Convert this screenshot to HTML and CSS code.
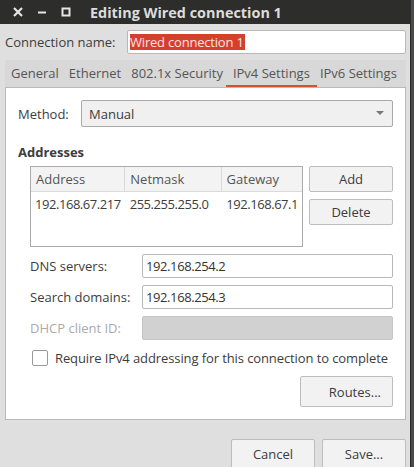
FILE: index.html
```html
<!DOCTYPE html>
<html lang="en">
<head>
    <meta charset="UTF-8">
    <title>Editing Wired connection 1</title>
    <link rel="stylesheet" href="styles.css">
</head>
<body>
    <div class="window">
        <div class="titlebar">
            <span class="wm-btn">
                <svg width="10" height="10" viewBox="0 0 10 10"><path d="M1 1 L9 9 M9 1 L1 9" stroke="#e6e6e6" stroke-width="2.2"/></svg>
            </span>
            <span class="wm-btn">
                <svg width="10" height="10" viewBox="0 0 10 10"><path d="M1 5.5 H9" stroke="#e6e6e6" stroke-width="2"/></svg>
            </span>
            <span class="wm-btn">
                <svg width="10" height="10" viewBox="0 0 10 10"><rect x="1.5" y="1.5" width="7" height="7" fill="none" stroke="#e6e6e6" stroke-width="2"/></svg>
            </span>
            <span class="title">Editing Wired connection 1</span>
        </div>

        <div class="name-row">
            <label class="name-label">Connection name:</label>
            <div class="entry name-entry"><span class="selected">Wired connection 1</span></div>
        </div>

        <div class="notebook">
            <div class="tabs">
                <span class="tab">General</span>
                <span class="tab">Ethernet</span>
                <span class="tab">802.1x Security</span>
                <span class="tab active">IPv4 Settings</span>
                <span class="tab">IPv6 Settings</span>
            </div>
            <div class="panel">
                <div class="method-row">
                    <span class="label">Method:</span>
                    <div class="combo">
                        <span>Manual</span>
                        <svg width="8" height="5" viewBox="0 0 8 5"><path d="M0 0 H8 L4 4 Z" fill="#777"/></svg>
                    </div>
                </div>

                <div class="section-title">Addresses</div>
                <div class="addresses">
                    <div class="table">
                        <div class="row head">
                            <span class="col c1">Address</span>
                            <span class="col c2">Netmask</span>
                            <span class="col c3">Gateway</span>
                        </div>
                        <div class="row data">
                            <span class="col c1">192.168.67.217</span>
                            <span class="col c2">255.255.255.0</span>
                            <span class="col c3">192.168.67.1</span>
                        </div>
                    </div>
                    <div class="side-buttons">
                        <button class="btn">Add</button>
                        <button class="btn">Delete</button>
                    </div>
                </div>

                <div class="fields">
                    <span class="label">DNS servers:</span>
                    <div class="entry num">192.168.254.2</div>
                    <span class="label">Search domains:</span>
                    <div class="entry num">192.168.254.3</div>
                    <span class="label disabled">DHCP client ID:</span>
                    <div class="entry disabled"></div>
                </div>

                <div class="check-row">
                    <span class="checkbox"></span>
                    <span class="check-text">Require IPv4 addressing for this connection to complete</span>
                </div>

                <div class="routes-row">
                    <button class="btn routes">Routes...</button>
                </div>
            </div>
        </div>

        <div class="dialog-buttons">
            <button class="btn big">Cancel</button>
            <button class="btn big">Save...</button>
        </div>
    </div>
</body>
</html>
```

FILE: styles.css
```css
body {
    margin: 0;
    width: 414px;
    height: 467px;
    overflow: hidden;
    background-color: #4a4a4a;
    font-family: "Open Sans", sans-serif;
    font-size: 13px;
    color: #3c3c3c;
}
.window {
    width: 410px;
    height: 467px;
    background-color: #dfdfdf;
    border-right: 1px solid #2a2a2a;
}
.titlebar {
    height: 24px;
    background-color: #2d2d2b;
    display: flex;
    align-items: center;
    padding-left: 13px;
}
.wm-btn {
    display: flex;
    width: 10px;
    height: 10px;
    margin-right: 14px;
}
.title {
    margin-left: 5px;
    color: #dcdcdc;
    font-weight: bold;
    font-size: 14.4px;
}
.name-row {
    display: flex;
    align-items: center;
    padding: 6px 4px 0 5px;
}
.name-label {
    width: 122px;
}
.entry {
    flex: 1;
    height: 22px;
    background: #fff;
    border: 1px solid #b8b8b8;
    border-radius: 2px;
    display: flex;
    align-items: center;
    padding-left: 6px;
    color: #333;
}
.entry.num {
    padding-left: 3px;
    letter-spacing: -0.4px;
}
.name-entry {
    padding-left: 2px;
}
.selected {
    background-color: #d5402e;
    color: #fbe5e0;
    line-height: 16px;
    padding-right: 1px;
    letter-spacing: -0.2px;
}
.notebook {
    margin: 6px 4px 0 5px;
}
.tabs {
    display: flex;
    height: 27px;
    background-color: #d8d8d8;
    padding-left: 1px;
}
.tab {
    padding: 4px 5px 0;
    color: #555;
    white-space: nowrap;
}
.tab.active {
    border-bottom: 2px solid #d9502e;
    height: 21px;
    padding: 4px 7px 0;
    margin: 0 -2px;
}
.panel {
    box-sizing: border-box;
    background: #fff;
    border: 1px solid #b9b9b9;
    height: 333px;
    padding: 12px 12px 0 12px;
}
.label {
    color: #3c3c3c;
}
.label.disabled {
    color: #aaa;
}
.method-row {
    display: flex;
    align-items: center;
}
.method-row .label {
    width: 63px;
}
.combo {
    flex: 1;
    height: 25px;
    background: #f0f0f0;
    border: 1px solid #a9a9a9;
    border-radius: 2px;
    display: flex;
    align-items: center;
    justify-content: space-between;
    padding: 0 8px 0 7px;
}
.section-title {
    font-weight: bold;
    margin-top: 16px;
}
.addresses {
    display: flex;
    gap: 6px;
    margin: 5px 0 0 12px;
}
.table {
    width: 271px;
    height: 79px;
    border: 1px solid #ababab;
}
.row {
    display: flex;
    height: 24px;
    align-items: center;
}
.row.head {
    background: #f3f3f3;
    border-bottom: 1px solid #dadada;
    color: #555;
}
.col {
    padding-left: 5px;
    height: 100%;
    display: flex;
    align-items: center;
    white-space: nowrap;
}
.c1 { width: 89px; }
.c2 { width: 91px; }
.c3 { width: 76px; }
.row.head .c1, .row.head .c2 {
    border-right: 1px solid #dadada;
}
.row.data {
    letter-spacing: -0.45px;
}
.row.data .c1 { width: 90px; padding-left: 4px; }
.row.data .c2 { width: 92px; }
.side-buttons {
    display: flex;
    flex-direction: column;
    gap: 7px;
}
.btn {
    width: 84px;
    height: 26px;
    padding: 0;
    background: #f2f2f2;
    border: 1px solid #bdbdbd;
    border-radius: 2px;
    font-family: "Open Sans", sans-serif;
    font-size: 13px;
    color: #3c3c3c;
}
.fields {
    display: grid;
    grid-template-columns: 112px 1fr;
    row-gap: 7px;
    align-items: center;
    margin: 7px 0 0 12px;
}
.entry.disabled {
    background: #d1d1d1;
    border-color: #c4c4c4;
}
.check-row {
    display: flex;
    align-items: center;
    gap: 7px;
    margin: 9px 0 0 14px;
}
.check-text {
    white-space: nowrap;
    letter-spacing: -0.1px;
}
.checkbox {
    width: 14px;
    height: 14px;
    border: 1px solid #9a9a9a;
    border-radius: 2px;
    background: #fff;
}
.routes-row {
    display: flex;
    justify-content: flex-end;
    margin-top: 9px;
}
.btn.routes {
    width: 93px;
    height: 31px;
    text-align: right;
    padding-right: 11px;
}
.dialog-buttons {
    display: flex;
    justify-content: flex-end;
    gap: 7px;
    padding: 19px 4px 0 0;
}
.btn.big {
    height: 30px;
}
```
